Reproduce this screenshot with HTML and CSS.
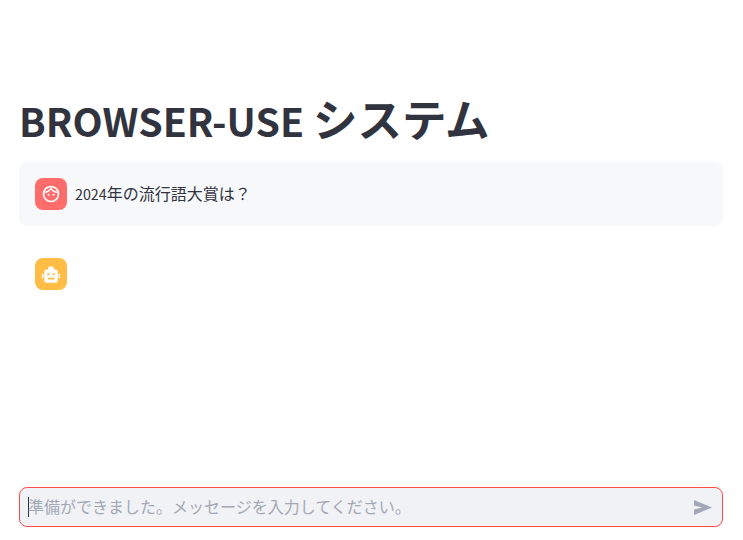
FILE: index.html
```html
<!DOCTYPE html>
<html lang="ja">
<head>
  <meta charset="UTF-8" />
  <title>BROWSER-USE システム</title>
  <meta name="viewport" content="width=device-width, initial-scale=1.0" />
  <link rel="stylesheet" href="styles.css">
</head>
<body>
  <div class="app">
    <main class="content">
      <h1><span class="latin">BROWSER-USE </span>システム</h1>

      <div class="message message-user">
        <div class="avatar avatar-user">
          <svg viewBox="0 0 24 24" width="20" height="20" fill="none" stroke="#fff" stroke-width="2">
            <circle cx="12" cy="12" r="9" />
            <path d="M4 10c3 0 6-1.500 8-5 1.500 3 4.500 5 8 5" stroke-width="1.600" />
            <circle cx="9" cy="13" r="1.200" fill="#fff" stroke="none" />
            <circle cx="15" cy="13" r="1.200" fill="#fff" stroke="none" />
          </svg>
        </div>
        <p class="message-text"><span class="digits">2024</span>年の流行語大賞は？</p>
      </div>

      <div class="message">
        <div class="avatar avatar-bot">
          <svg viewBox="0 -1.500 24 24" width="20" height="20" fill="#fff">
            <rect x="8.500" y="1.500" width="7" height="4.500" rx="2" />
            <path d="M6.500 5h11A2.500 2.500 0 0 1 20 7.500v11a2.500 2.500 0 0 1-2.500 2.500h-11A2.500 2.500 0 0 1 4 18.500v-11A2.500 2.500 0 0 1 6.500 5zM7.500 9.500V12h2.500V9.500zM14 9.500V12h2.500V9.500zM8 15v2h8v-2z" fill-rule="evenodd" />
            <rect x="1" y="10" width="2" height="6" rx="1" />
            <rect x="21" y="10" width="2" height="6" rx="1" />
          </svg>
        </div>
      </div>
    </main>

    <div class="chat-input">
      <span class="caret"></span>
      <span class="placeholder">準備ができました。メッセージを入力してください。</span>
      <svg class="send" viewBox="0 0 18 15" width="18" height="15" fill="#a3a8b8">
        <path d="M0 0l18 7.500L0 15V9.500l8-2-8-2z" />
      </svg>
    </div>
  </div>
</body>
</html>
```

FILE: styles.css
```css
body {
  font-family: "Noto Sans CJK JP", "Noto Sans", sans-serif;
  background: #fff;
  color: #31333f;
  margin: 0;
  padding: 0;
}

.app {
  height: 540px;
  display: flex;
  flex-direction: column;
  justify-content: space-between;
  padding: 0 20px 13px 19px;
  box-sizing: border-box;
  overflow: hidden;
}

.content {
  padding-top: 88px;
}

h1 {
  font-size: 44.500px;
  font-weight: 700;
  line-height: 60px;
  height: 60px;
  margin: 0 0 14px 0;
}

.latin {
  font-size: 39.200px;
  line-height: 1;
}

.message {
  display: flex;
  gap: 8px;
  padding: 16px;
  border-radius: 8px;
  margin-bottom: 16px;
}

.message-user {
  background: #f7f8fa;
}

.message-text {
  margin: 0;
  font-size: 16px;
  line-height: 31px;
}

.digits {
  font-size: 14.300px;
  line-height: 1;
}

.avatar {
  width: 32px;
  height: 32px;
  border-radius: 8px;
  display: flex;
  align-items: center;
  justify-content: center;
  flex-shrink: 0;
}

.avatar-user {
  background: #ff6c6c;
}

.avatar-bot {
  background: #ffbd45;
}

.chat-input {
  display: flex;
  align-items: center;
  height: 40px;
  box-sizing: border-box;
  background: #f0f2f6;
  border: 1px solid #ff4b4b;
  border-radius: 8px;
  padding: 0 10px 0 8px;
}

.caret {
  width: 1px;
  height: 20px;
  background: #31333f;
  margin-right: -1px;
}

.placeholder {
  flex: 1;
  font-size: 16px;
  line-height: 20px;
  padding-bottom: 2px;
  color: #a3a8b4;
}
```
